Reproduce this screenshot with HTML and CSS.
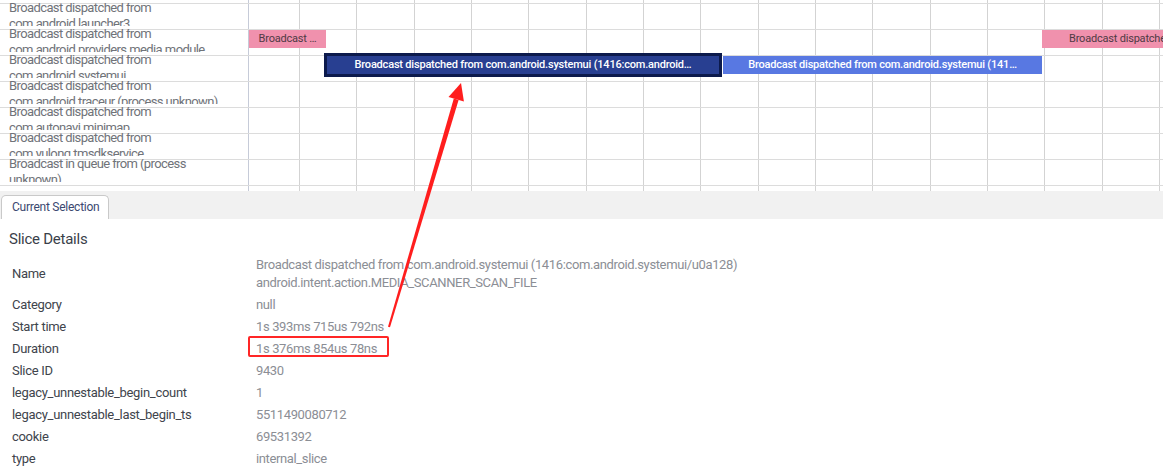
FILE: index.html
```html
<!DOCTYPE html>
<html>
<head>
<meta charset="utf-8">
<link rel="stylesheet" href="styles.css">
</head>
<body>
<div class="app">
  <div class="tracks">
    <div class="row spacer"><div class="label"></div><div class="lane"></div></div>
    <div class="row">
      <div class="label"><div class="txt">Broadcast dispatched from<br>com.android.launcher3</div></div>
      <div class="lane"></div>
    </div>
    <div class="row">
      <div class="label"><div class="txt">Broadcast dispatched from<br>com.android.providers.media.module</div></div>
      <div class="lane">
        <div class="slice pink" style="left:0;width:77px">Broadcast …</div>
        <div class="slice pink wide" style="left:793px;width:320px">Broadcast dispatched from com.android.providers.media.module (…</div>
      </div>
    </div>
    <div class="row">
      <div class="label"><div class="txt">Broadcast dispatched from<br>com.android.systemui</div></div>
      <div class="lane">
        <div class="slice navy selected" style="left:78px;width:392px">Broadcast dispatched from com.android.systemui (1416:com.android…</div>
        <div class="slice blue" style="left:474px;width:319px">Broadcast dispatched from com.android.systemui (141…</div>
      </div>
    </div>
    <div class="row">
      <div class="label"><div class="txt">Broadcast dispatched from<br>com.android.traceur (process unknown)</div></div>
      <div class="lane"></div>
    </div>
    <div class="row">
      <div class="label"><div class="txt">Broadcast dispatched from<br>com.autonavi.minimap</div></div>
      <div class="lane"></div>
    </div>
    <div class="row">
      <div class="label"><div class="txt">Broadcast dispatched from<br>com.yulong.tmsdkservice</div></div>
      <div class="lane"></div>
    </div>
    <div class="row">
      <div class="label"><div class="txt">Broadcast in queue from (process<br>unknown)</div></div>
      <div class="lane"></div>
    </div>
    <div class="row">
      <div class="label single"><div class="txt">Broadcast in queue from com.android.phone</div></div>
      <div class="lane"></div>
    </div>
  </div>

  <div class="panel">
    <div class="tabs"><div class="tab">Current Selection</div></div>
    <div class="details">
      <h2 class="title">Slice Details</h2>
      <div class="table">
        <div class="k">Name</div>
        <div class="v">Broadcast dispatched from com.android.systemui (1416:com.android.systemui/u0a128)<br>android.intent.action.MEDIA_SCANNER_SCAN_FILE</div>
        <div class="k">Category</div><div class="v">null</div>
        <div class="k">Start time</div><div class="v">1s 393ms 715us 792ns</div>
        <div class="k">Duration</div><div class="v">1s 376ms 854us 78ns</div>
        <div class="k">Slice ID</div><div class="v">9430</div>
        <div class="k">legacy_unnestable_begin_count</div><div class="v">1</div>
        <div class="k">legacy_unnestable_last_begin_ts</div><div class="v">5511490080712</div>
        <div class="k">cookie</div><div class="v">69531392</div>
        <div class="k">type</div><div class="v">internal_slice</div>
      </div>
    </div>
  </div>

  <div class="redbox"></div>
  <svg class="annot" width="1163" height="472" viewBox="0 0 1163 472">
    <polygon fill="#ff1e1e" points="388,326.7 390,327.3 458.6,100 453.8,98.6"/>
    <polygon fill="#ff1e1e" points="461,83 448.5,97 463.9,101.6"/>
  </svg>
</div>
</body>
</html>
```

FILE: styles.css
```css
html, body {
  margin: 0;
  padding: 0;
  background: #ffffff;
}

body {
  font-family: Roboto, "Liberation Sans", sans-serif;
  width: 1163px;
  height: 472px;
  overflow: hidden;
}

.app {
  position: relative;
  width: 1163px;
  height: 472px;
  display: flex;
  flex-direction: column;
}

/* ---------- tracks ---------- */
.tracks {
  height: 191px;
  overflow: hidden;
  flex: 0 0 auto;
  background: #ffffff;
}

.row {
  display: flex;
  height: 26px;
  box-sizing: border-box;
  border-top: 1px solid #dcdcdc;
}

.row.spacer {
  height: 3px;
  border-top: 0;
}

.label {
  flex: 0 0 248px;
  height: 23px;
  margin-top: -1px;
  overflow: hidden;
  padding-left: 9px;
  box-sizing: border-box;
  font-size: 13px;
  letter-spacing: -0.6px;
  line-height: 15.5px;
  color: #707379;
  white-space: nowrap;
}

.row.spacer .label {
  height: 3px;
  margin-top: 0;
}

.label .txt {
  margin-top: -3px;
}

.label.single .txt {
  margin-top: 6px;
}

.lane {
  flex: 1 1 auto;
  position: relative;
  border-left: 1px solid #c6cbd8;
  background-image: repeating-linear-gradient(90deg,
      transparent 0px, transparent 50px,
      #d3d3d3 50px, #d3d3d3 51px,
      transparent 51px, transparent 57.333px);
}

.slice {
  position: absolute;
  top: 0;
  height: 18px;
  box-sizing: border-box;
  font-size: 11px;
  letter-spacing: -0.2px;
  line-height: 18px;
  text-align: center;
  white-space: nowrap;
  overflow: hidden;
}

.slice.pink {
  background: #f091ad;
  color: #4f3a44;
}

.slice.pink.wide {
  text-align: left;
  padding-left: 27px;
}

.slice.navy {
  background: #283f91;
  color: #ffffff;
  font-weight: 500;
}

.slice.selected {
  outline: 3px solid #0c1a4c;
  z-index: 2;
  overflow: visible;
}

.slice.blue {
  background: #5878e2;
  color: #ffffff;
  font-weight: 500;
}

/* ---------- bottom panel ---------- */
.panel {
  flex: 1 1 auto;
  display: flex;
  flex-direction: column;
  background: #f1f1f1;
  padding-top: 4px;
}

.tabs {
  display: flex;
  height: 24px;
}

.tab {
  margin-left: 1px;
  height: 24px;
  box-sizing: border-box;
  padding: 0 9px 0 10px;
  border: 1px solid #c9c9c9;
  border-bottom: 0;
  border-radius: 5px 5px 0 0;
  background: #ffffff;
  font-size: 12px;
  letter-spacing: -0.25px;
  line-height: 23px;
  color: #3b4870;
}

.details {
  flex: 1 1 auto;
  background: #ffffff;
  padding-top: 10px;
}

.title {
  margin: 0;
  padding-left: 9px;
  font-size: 15px;
  letter-spacing: -0.25px;
  line-height: 20px;
  font-weight: 400;
  color: #3a3f4a;
}

.table {
  margin-top: 5px;
  padding-left: 12px;
  display: grid;
  grid-template-columns: 244px 1fr;
  font-size: 13px;
  line-height: 18px;
}

.table .k {
  padding: 2px 0;
  color: #40444c;
  letter-spacing: -0.3px;
  align-self: center;
  white-space: nowrap;
}

.table .v {
  padding: 2px 0;
  color: #8b8e95;
  letter-spacing: -0.37px;
  white-space: nowrap;
}

/* ---------- annotations ---------- */
.redbox {
  position: absolute;
  left: 248px;
  top: 336px;
  width: 141px;
  height: 21px;
  box-sizing: border-box;
  border: 2px solid #ff2626;
  border-radius: 2px;
}

.annot {
  position: absolute;
  left: 0;
  top: 0;
  pointer-events: none;
}
```
